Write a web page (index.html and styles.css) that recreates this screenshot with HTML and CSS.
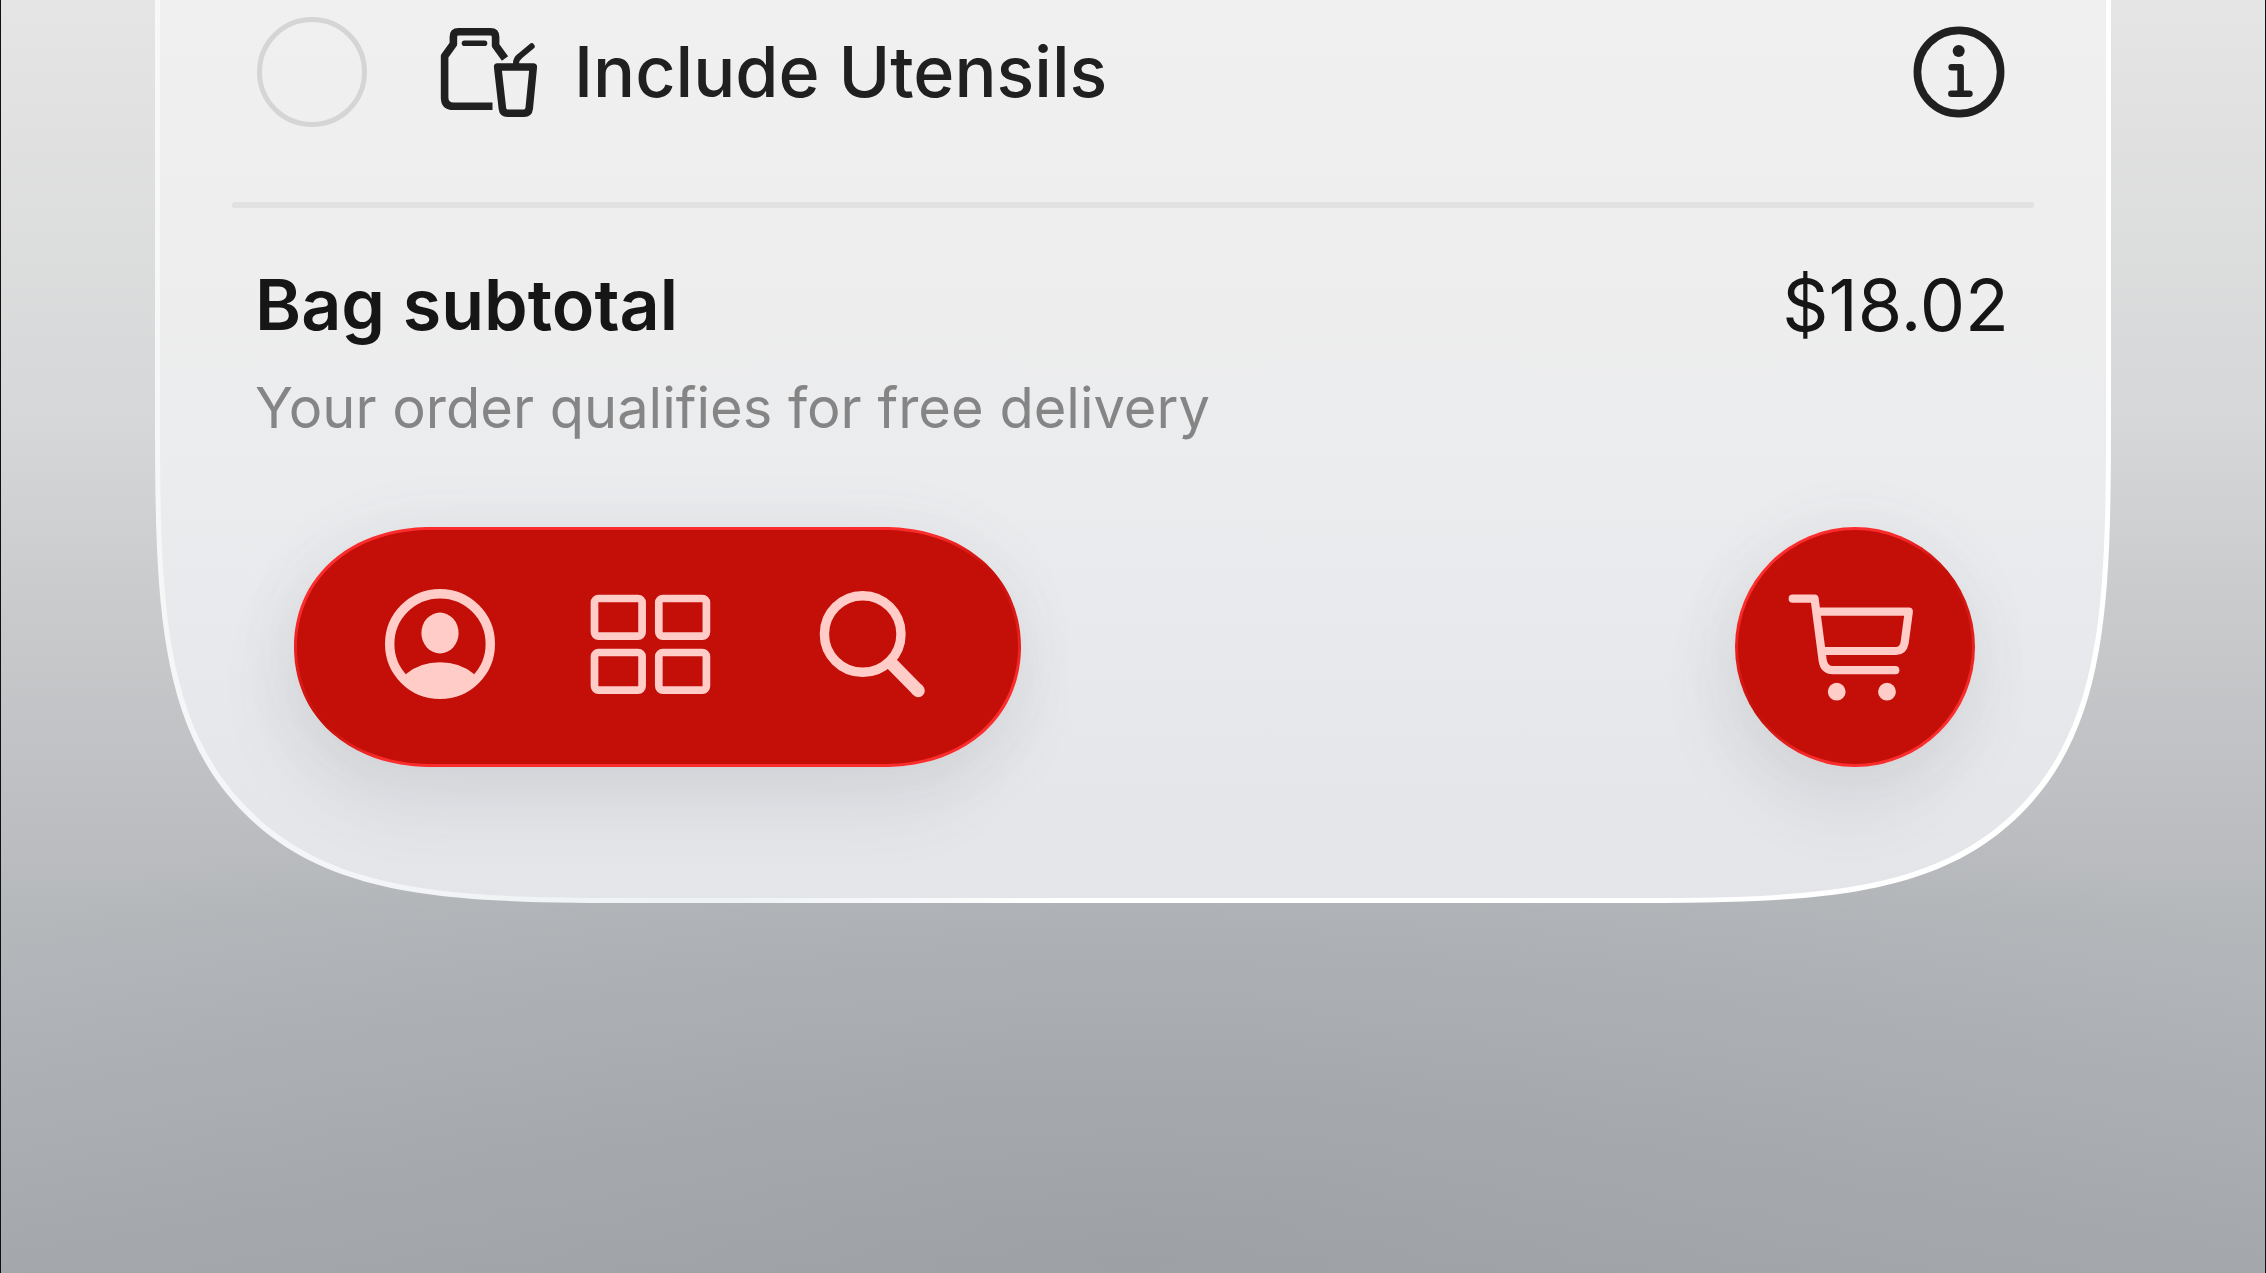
FILE: index.html
```html
<!DOCTYPE html>
<html lang="en">
<head>
  <meta charset="utf-8">
  <meta name="viewport" content="width=device-width, initial-scale=1">
  <title>Bag</title>
  <link rel="stylesheet" href="styles.css">
</head>
<body>
  <main class="bag">
    <div class="option">
      <input class="option-check" type="checkbox" id="utensils">
      <label class="option-label" for="utensils">
        <svg class="option-icon" viewBox="0 0 106 98" aria-hidden="true">
          <g fill="none" stroke="currentColor" stroke-width="7.6" stroke-linejoin="round">
            <path d="M56.5 83.3H17.5Q8.6 83.3 8.6 74.5V33.3L17.4 21V14Q17.4 8.8 22.5 8.8H54.5Q59.6 8.8 59.6 14V22.5L69 35.5"/>
            <path d="M61.7 44H97.3L93.2 85.5Q92.6 90.2 88 90.2H71.5Q67 90.2 66.4 85.5Z"/>
            <path d="M28.5 20.3H48.5" stroke-width="5.6" stroke-linecap="round"/>
            <path d="M80 43V40.5Q80 36 84 33L95.7 23.3" stroke-width="6" stroke-linecap="round"/>
          </g>
        </svg>
        Include Utensils
      </label>
      <button class="info" type="button" aria-label="About utensils">
        <svg viewBox="0 0 92 92" aria-hidden="true">
          <circle cx="46" cy="46" r="41.6" fill="none" stroke="currentColor" stroke-width="7.7"/>
          <circle cx="45.7" cy="25" r="6" fill="currentColor"/>
          <path d="M38.7 41.3H47.6V67.8M38.4 67.8H56.4" fill="none" stroke="currentColor" stroke-width="6.6" stroke-linecap="round" stroke-linejoin="round"/>
        </svg>
      </button>
    </div>

    <hr class="rule">

    <section class="summary">
      <div class="summary-line">
        <h1 class="summary-title">Bag subtotal</h1>
        <span class="summary-price">$18.02</span>
      </div>
      <p class="summary-note">Your order qualifies for free delivery</p>
    </section>

    <div class="toolbar">
      <nav class="tabs" aria-label="Main">
        <button class="tab" type="button" aria-label="Account">
          <svg viewBox="0 0 130 120" aria-hidden="true">
            <circle cx="65" cy="57" r="50.3" fill="none" stroke="currentColor" stroke-width="9.4"/>
            <ellipse cx="65" cy="46" rx="18.6" ry="20.4" fill="currentColor"/>
            <path d="M31 87Q45 75.3 65 75.3T99 87L97 95Q83 109 65 109T33 95Z" fill="currentColor"/>
          </svg>
        </button>
        <button class="tab" type="button" aria-label="Categories">
          <svg viewBox="0 0 130 120" aria-hidden="true">
            <g fill="none" stroke="currentColor" stroke-width="7.7">
              <rect x="9.5" y="11.5" width="47.6" height="37.6" rx="4"/>
              <rect x="73.8" y="11.5" width="47.6" height="37.6" rx="4"/>
              <rect x="9.5" y="65.5" width="47.6" height="37.6" rx="4"/>
              <rect x="73.8" y="65.5" width="47.6" height="37.6" rx="4"/>
            </g>
          </svg>
        </button>
        <button class="tab" type="button" aria-label="Search">
          <svg viewBox="0 0 130 120" aria-hidden="true">
            <g fill="none" stroke="currentColor">
              <circle cx="67.7" cy="47" r="38.3" stroke-width="9.4"/>
              <path d="M97 77L123.3 103.7" stroke-width="13"/>
              <path d="M122 102.4L123.3 103.7" stroke-width="13" stroke-linecap="round"/>
            </g>
          </svg>
        </button>
      </nav>
      <button class="cart" type="button" aria-label="View cart">
        <svg viewBox="0 0 140 120" aria-hidden="true">
          <g fill="none" stroke="currentColor" stroke-width="8.2" stroke-linecap="round" stroke-linejoin="round">
            <path d="M7.7 11.7H29.6L37.6 73Q39 83.2 48 83.2H110.3"/>
            <path d="M34 24.7H123.8L119.6 56Q118 64 111 64H40"/>
          </g>
          <circle cx="51.7" cy="104.7" r="8.9" fill="currentColor"/>
          <circle cx="102" cy="104.7" r="8.9" fill="currentColor"/>
        </svg>
      </button>
    </div>
  </main>
</body>
</html>
```
FILE: styles.css
```css
:root {
  --ink: #202020;
  --ink-strong: #161616;
  --muted: #858585;
  --red: #c40e08;
  --red-edge: #fb2c2c;
  --blush: #ffccc8;
}

* {
  box-sizing: border-box;
}

body {
  margin: 0;
  min-height: 100vh;
  padding: 0 154px;
  border: solid #111;
  border-width: 0 1px;
  font-family: Inter, "Liberation Sans", sans-serif;
  color: var(--ink);
  background:
    radial-gradient(ellipse 58% 45% at 50% 98%, rgba(148, 152, 157, 0.45), rgba(148, 152, 157, 0) 100%),
    linear-gradient(#e5e5e5 0%, #d6d7d8 33%, #c8c9cb 49%, #bebfc2 63%, #b5b8bb 72%, #adb0b4 86%, #a5a8ac 100%);
}

h1,
p {
  margin: 0;
}

button {
  padding: 0;
  border: 0;
  background: none;
  color: inherit;
  cursor: pointer;
}

svg {
  display: block;
}

/* Sheet */
.bag {
  padding: 17px 72px 131px;
  border: 5px solid transparent;
  border-top: 0;
  border-radius: 0 0 310px 310px;
  background:
    linear-gradient(#f0f0f0 0%, #eeeeee 30%, #ebecee 52%, #e4e5e9 100%) padding-box,
    linear-gradient(115deg, #f8f8f8 0%, #eff2f4 42%, #fff 56%) border-box;
}

/* Option row */
.option {
  display: flex;
  align-items: center;
  height: 110px;
  padding: 0 29px 0 25px;
}

.option-check {
  appearance: none;
  flex: none;
  width: 110px;
  height: 110px;
  margin: 0;
  border: 5px solid #d5d5d5;
  border-radius: 50%;
}

.option-check:checked {
  background: var(--red);
}

.option-label {
  display: flex;
  flex: 1;
  align-items: center;
  gap: 32px;
  padding-left: 69px;
  font-size: 70px;
  font-weight: 500;
  line-height: 90px;
}

.option-icon {
  width: 106px;
  height: 98px;
}

.info svg {
  width: 92px;
  height: 92px;
}

.rule {
  height: 6px;
  margin: 75px 0 0;
  border: 0;
  border-radius: 3px;
  background: #e1e1e1;
}

/* Subtotal */
.summary {
  padding: 50px 25px 0 23px;
}

.summary-line {
  display: flex;
  align-items: center;
  justify-content: space-between;
  color: var(--ink-strong);
  font-size: 72px;
  line-height: 94px;
}

.summary-title {
  font-size: 70px;
  font-weight: 600;
}

.summary-note {
  color: var(--muted);
  font-size: 56px;
  line-height: 80px;
  padding-top: 16px;
}

/* Bottom bar */
.toolbar {
  display: flex;
  align-items: center;
  justify-content: space-between;
  padding: 79px 59px 0 62px;
}

.tabs,
.cart {
  height: 240px;
  border: 3px solid transparent;
  color: var(--blush);
  box-shadow: -8px 38px 70px rgba(80, 88, 92, 0.11), 0 0 70px rgba(100, 108, 112, 0.06);
}

.tabs {
  display: flex;
  align-items: center;
  gap: 80px;
  padding: 0 93px 0 78px;
  border-radius: 130px / 120px;
  background:
    linear-gradient(var(--red), var(--red)) padding-box,
    conic-gradient(var(--red-edge) 68deg, var(--red) 77deg, var(--red-edge) 96deg 248deg, var(--red) 257deg, var(--red-edge) 276deg) border-box;
}

.tab svg {
  width: 130px;
  height: 120px;
}

.cart {
  display: grid;
  place-items: center;
  width: 240px;
  border-radius: 50%;
  background:
    linear-gradient(var(--red), var(--red)) padding-box,
    conic-gradient(var(--red-edge) 20deg, var(--red) 50deg, var(--red-edge) 115deg 200deg, var(--red) 235deg, var(--red-edge) 290deg) border-box;
}

.cart svg {
  width: 140px;
  height: 120px;
}

/* Continuous-curvature corners where the browser can draw them */
@supports (corner-shape: superellipse(2)) {
  .bag {
    border-radius: 0 0 490px 490px;
    corner-shape: superellipse(1.78);
  }

  .tabs {
    border-radius: 137px / 120px;
    corner-shape: superellipse(1.08);
  }
}
```
